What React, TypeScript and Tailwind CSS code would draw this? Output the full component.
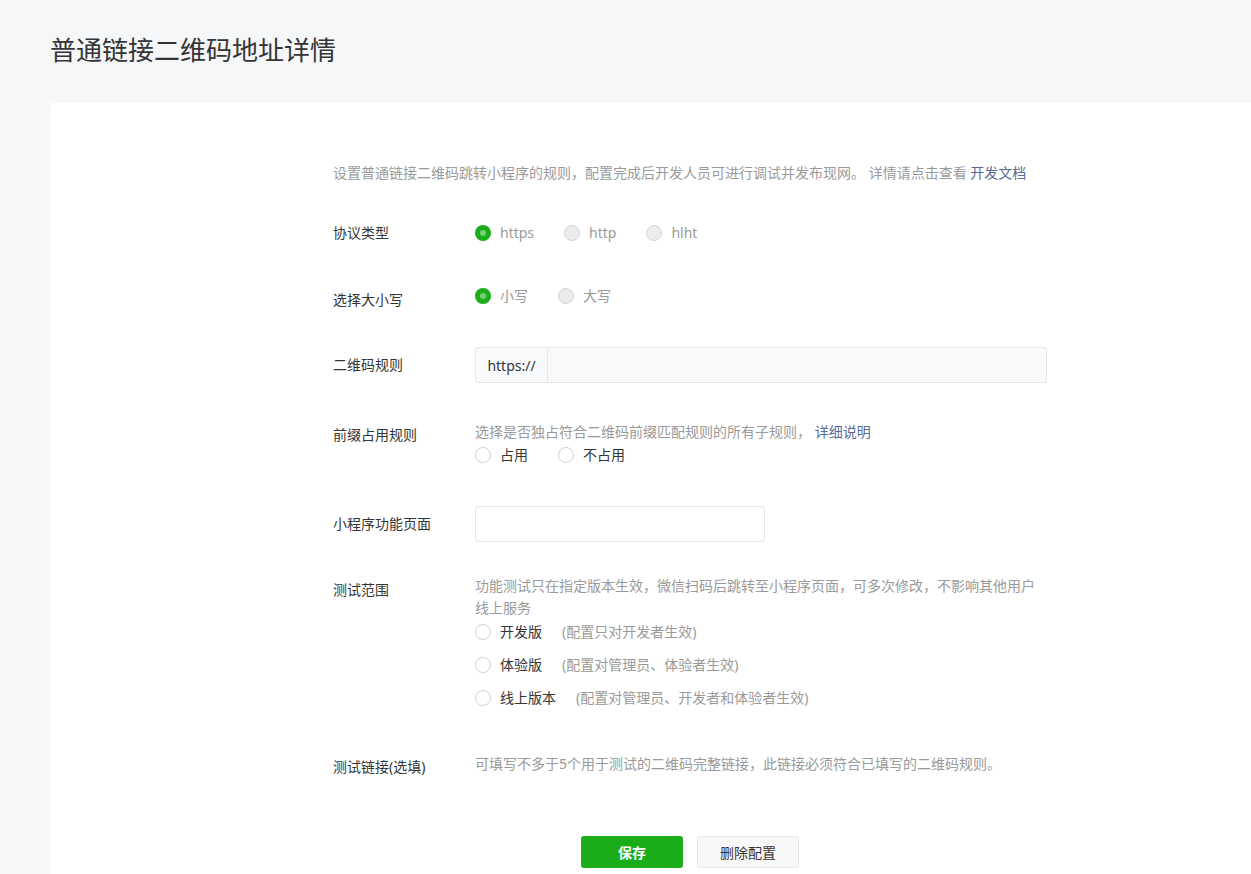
import React from "react";

const FONT = { fontFamily: '"Noto Sans", "Noto Sans CJK SC", sans-serif' };

function Radio({ state }: { state: "on" | "off" | "disabled" }) {
  if (state === "on") {
    return (
      <span className="flex h-4 w-4 shrink-0 items-center justify-center rounded-full bg-[#1aad19]">
        <span className="h-[6px] w-[6px] rounded-full bg-[#76cd75]" />
      </span>
    );
  }
  if (state === "disabled") {
    return <span className="h-4 w-4 shrink-0 rounded-full border border-[#d6d6d8] bg-[#ececee]" />;
  }
  return <span className="h-4 w-4 shrink-0 rounded-full border border-[#d2d2d2] bg-white" />;
}

function Opt({ state, label, muted, note, gap = "mr-[30px]" }: { state: "on" | "off" | "disabled"; label: string; muted?: boolean; note?: string; gap?: string }) {
  return (
    <div className={`flex h-[22px] items-center ${gap}`}>
      <Radio state={state} />
      <span className={`ml-[9px] text-[14px] leading-[22px] ${muted ? "text-[#9a9a9a]" : "text-[#353535]"}`}>{label}</span>
      {note && <span className="ml-[20px] text-[14px] leading-[22px] text-[#9a9a9a]">{note}</span>}
    </div>
  );
}

function Label({ children, pt = "pt-0" }: { children: React.ReactNode; pt?: string }) {
  return <div className={`w-[142px] shrink-0 text-[14px] leading-[22px] text-[#353535] ${pt}`}>{children}</div>;
}

export default function App() {
  return (
    <div className="min-h-[874px] bg-[#f6f7f9] pt-[33px]" style={FONT}>
      <h1 className="ml-[50px] text-[26px] leading-[34px] font-normal text-[#353535]">普通链接二维码地址详情</h1>
      <div className="ml-[50px] mt-[36px] min-h-[771px] rounded-tl-[2px] bg-white pt-[59px] pb-[10px]">
        <div className="ml-[283px] w-[714px]">
          <p className="text-[14px] leading-[22px] text-[#9a9a9a]">
            设置普通链接二维码跳转小程序的规则，配置完成后开发人员可进行调试并发布现网。 详情请点击查看 <span className="text-[#576b95]">开发文档</span>
          </p>

          <div className="mt-[38px] flex">
            <Label>协议类型</Label>
            <div className="flex">
              <Opt state="on" label="https" muted />
              <Opt state="disabled" label="http" muted />
              <Opt state="disabled" label="hlht" muted />
            </div>
          </div>

          <div className="mt-[41px] flex">
            <Label pt="pt-[4px]">选择大小写</Label>
            <div className="flex">
              <Opt state="on" label="小写" muted />
              <Opt state="disabled" label="大写" muted />
            </div>
          </div>

          <div className="mt-[36px] flex items-center">
            <Label>二维码规则</Label>
            <div className="flex h-[36px] w-[572px] rounded-[3px] border border-[#e4e8eb] bg-[#f8f9fb]">
              <div className="flex w-[72px] items-center justify-center border-r border-[#e4e8eb] text-[14px] text-[#353535]">https://</div>
              <div className="flex-1" />
            </div>
          </div>

          <div className="mt-[38px] flex">
            <Label pt="pt-[3px]">前缀占用规则</Label>
            <div>
              <p className="text-[14px] leading-[22px] text-[#9a9a9a]">
                选择是否独占符合二维码前缀匹配规则的所有子规则， <span className="text-[#576b95]">详细说明</span>
              </p>
              <div className="mt-[1px] flex">
                <Opt state="off" label="占用" />
                <Opt state="off" label="不占用" />
              </div>
            </div>
          </div>

          <div className="mt-[40px] flex items-center">
            <Label>小程序功能页面</Label>
            <div className="h-[36px] w-[290px] rounded-[3px] border border-[#e4e8eb] bg-white" />
          </div>

          <div className="mt-[33px] flex">
            <Label pt="pt-[4px]">测试范围</Label>
            <div>
              <p className="w-[566px] text-[14px] leading-[22px] text-[#9a9a9a]">
                功能测试只在指定版本生效，微信扫码后跳转至小程序页面，可多次修改，不影响其他用户线上服务
              </p>
              <div className="mt-[2px] flex flex-col gap-[11px]">
                <Opt state="off" label="开发版" note="(配置只对开发者生效)" />
                <Opt state="off" label="体验版" note="(配置对管理员、体验者生效)" />
                <Opt state="off" label="线上版本" note="(配置对管理员、开发者和体验者生效)" />
              </div>
            </div>
          </div>

          <div className="mt-[44px] flex">
            <Label pt="pt-[3px]">测试链接(选填)</Label>
            <p className="text-[14px] leading-[22px] text-[#9a9a9a]">可填写不多于5个用于测试的二维码完整链接，此链接必须符合已填写的二维码规则。</p>
          </div>

          <div className="mt-[58px] flex justify-center gap-[14px]">
            <button className="h-[32px] w-[102px] rounded-[3px] bg-[#1aad19] text-[14px] font-bold text-white">保存</button>
            <button className="h-[32px] w-[102px] rounded-[3px] border border-[#e5e5e5] bg-[#f8f8f8] text-[14px] text-[#353535]">删除配置</button>
          </div>
        </div>
      </div>
    </div>
  );
}
